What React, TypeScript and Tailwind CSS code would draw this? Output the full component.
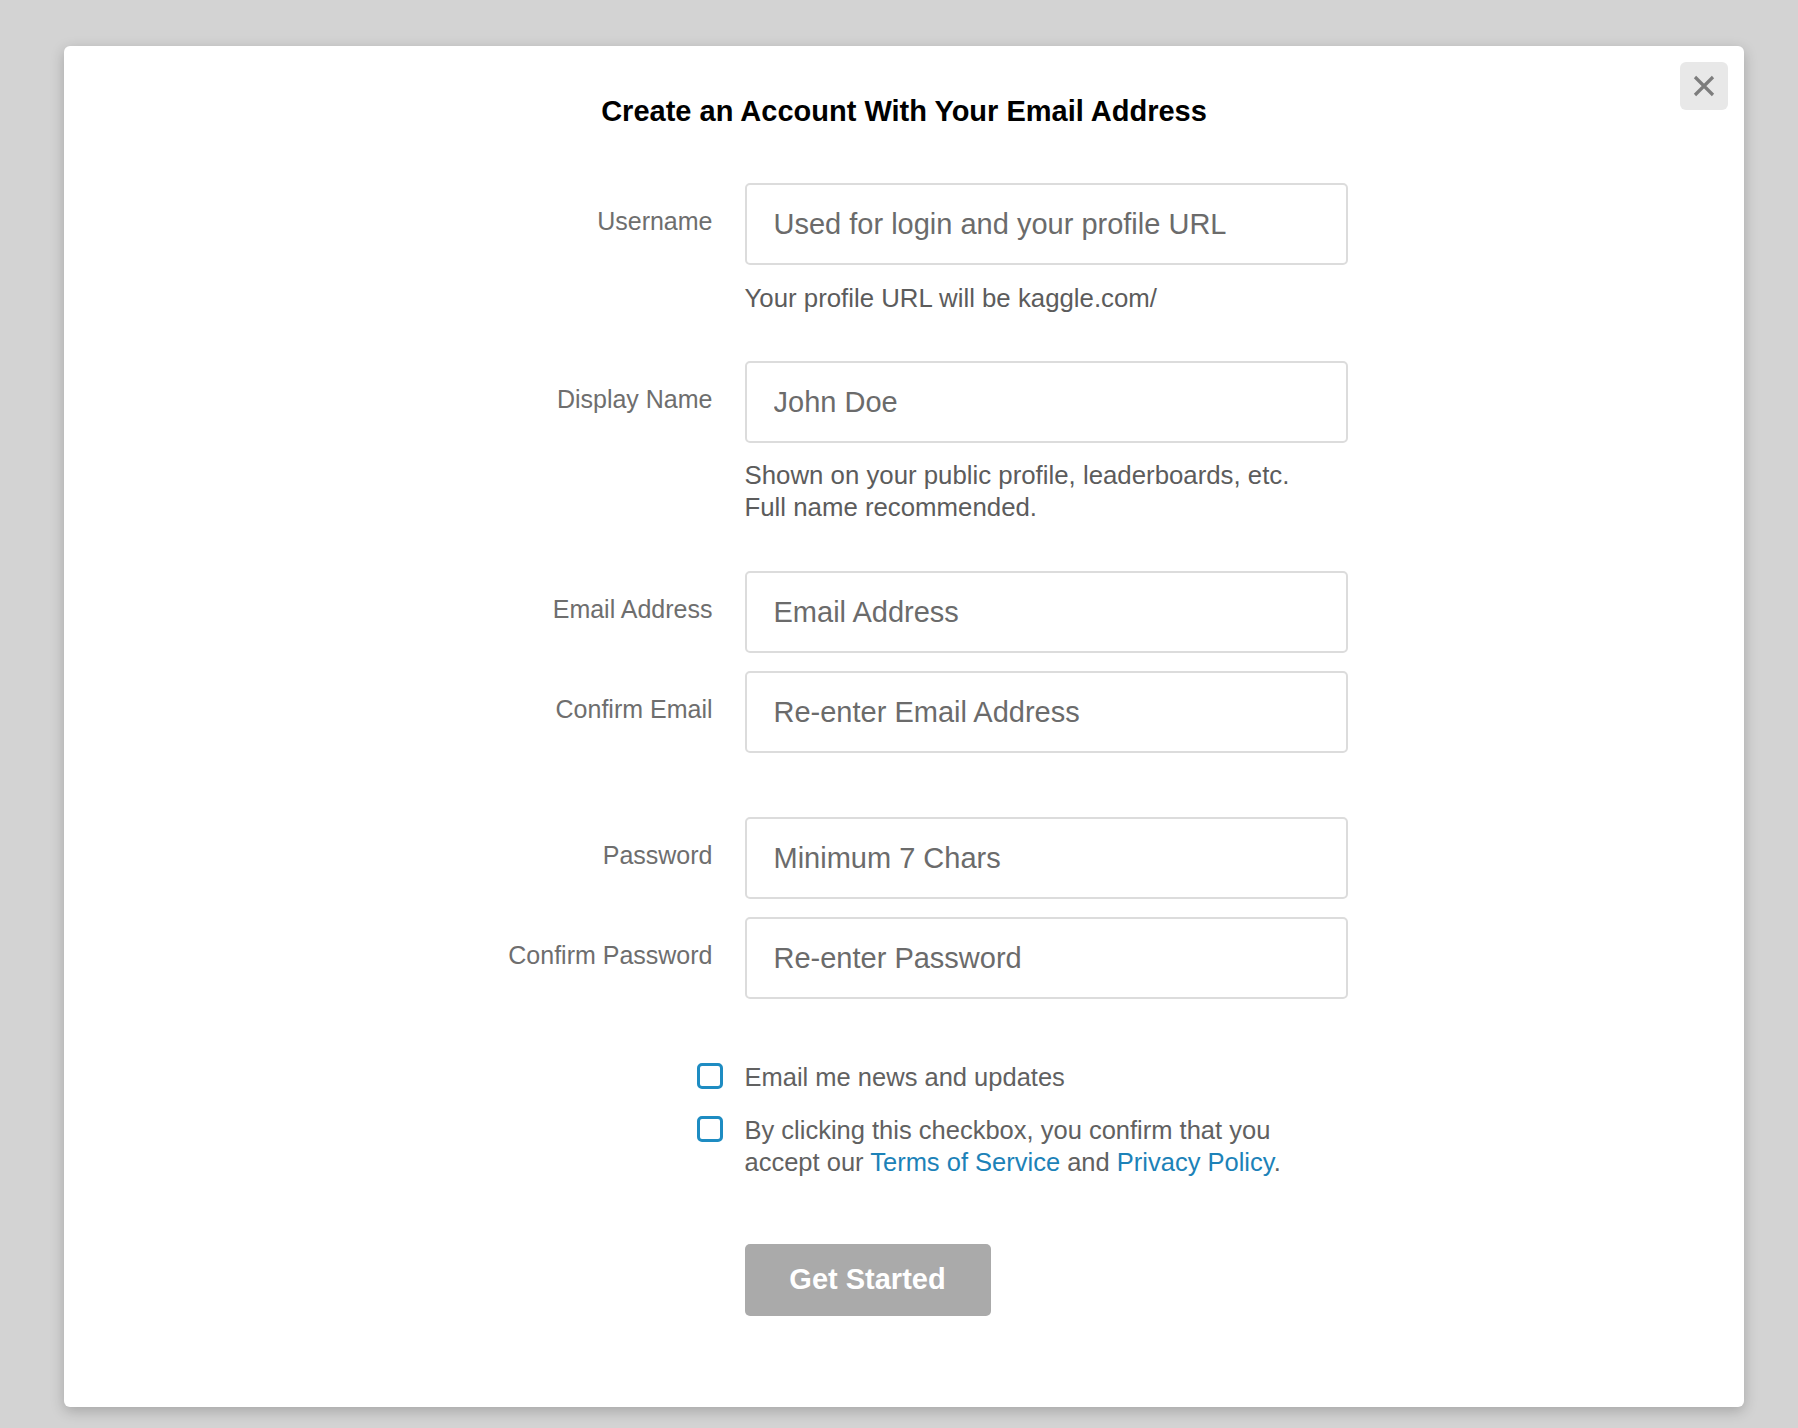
import React from "react";

const font = { fontFamily: '"Liberation Sans", Arial, sans-serif' };

interface FieldProps {
  label: string;
  placeholder: string;
  type?: string;
}

const Field: React.FC<FieldProps> = ({ label, placeholder, type = "text" }) => (
  <div className="grid grid-cols-[252px_603px] gap-x-[32px] items-start">
    <label className="text-right text-[25px] leading-[32px] text-[#6e6e6e] pt-[22px]">
      {label}
    </label>
    <input
      type={type}
      placeholder={placeholder}
      className="h-[82px] w-full rounded-[5px] border-2 border-[#dcdcdc] bg-white pl-[27px] pr-4 text-[29px] text-[#333] outline-none placeholder:text-[#6b6b6b]"
      style={font}
    />
  </div>
);

const Help: React.FC<{ children: React.ReactNode }> = ({ children }) => (
  <div className="grid grid-cols-[252px_603px] gap-x-[32px]">
    <div />
    <p className="text-[25.8px] leading-[32px] text-[#5c5c5c]">{children}</p>
  </div>
);

const CheckRow: React.FC<{ children: React.ReactNode }> = ({ children }) => (
  <div className="grid grid-cols-[252px_603px] gap-x-[32px] items-start">
    <div className="flex justify-end">
      <span className="-mr-[10px] mt-[2px] block h-[26px] w-[26px] rounded-[5px] border-[3px] border-[#1e8cc2] bg-white" />
    </div>
    <p className="text-[25.5px] leading-[32px] text-[#616161]">{children}</p>
  </div>
);

export default function App() {
  return (
    <div
      className="min-h-[1428px] bg-[#d3d3d3] pt-[46px] pl-[64px] pr-[54px] pb-[21px]"
      style={font}
    >
      <div className="relative h-[1361px] w-[1680px] rounded-md bg-white pt-[47px] shadow-[0_4px_14px_rgba(0,0,0,0.22)]">
        {/* close button */}
        <button className="absolute top-[16px] right-[16px] flex h-[48px] w-[48px] items-center justify-center rounded-md bg-[#e8e8e8]">
          <svg width="22" height="22" viewBox="0 0 22 22">
            <path
              d="M2 2 L20 20 M20 2 L2 20"
              stroke="#7d7d7d"
              strokeWidth="3.2"
              strokeLinecap="butt"
            />
          </svg>
        </button>

        <h1 className="text-center text-[29px] font-bold leading-[36px] text-black">
          Create an Account With Your Email Address
        </h1>

        <div className="mx-auto mt-[54px] w-[887px]">
          <Field label="Username" placeholder="Used for login and your profile URL" />
          <div className="mt-[17px]">
            <Help>Your profile URL will be kaggle.com/</Help>
          </div>

          <div className="mt-[47px]">
            <Field label="Display Name" placeholder="John Doe" />
          </div>
          <div className="mt-[16px]">
            <Help>
              Shown on your public profile, leaderboards, etc.
              <br />
              Full name recommended.
            </Help>
          </div>

          <div className="mt-[48px] flex flex-col gap-[18px]">
            <Field label="Email Address" placeholder="Email Address" type="email" />
            <Field label="Confirm Email" placeholder="Re-enter Email Address" type="email" />
          </div>

          <div className="mt-[64px] flex flex-col gap-[18px]">
            <Field label="Password" placeholder="Minimum 7 Chars" type="password" />
            <Field label="Confirm Password" placeholder="Re-enter Password" type="password" />
          </div>

          <div className="mt-[62px] flex flex-col gap-[21px]">
            <CheckRow>Email me news and updates</CheckRow>
            <CheckRow>
              By clicking this checkbox, you confirm that you
              <br />
              accept our <span className="text-[#1c82b8]">Terms of Service</span> and{" "}
              <span className="text-[#1c82b8]">Privacy Policy</span>.
            </CheckRow>
          </div>

          <div className="mt-[66px] grid grid-cols-[252px_603px] gap-x-[32px]">
            <div />
            <div>
              <button className="h-[72px] w-[246px] rounded-[5px] bg-[#aaaaaa] text-[29px] font-bold text-white">
                Get Started
              </button>
            </div>
          </div>
        </div>
      </div>
    </div>
  );
}
